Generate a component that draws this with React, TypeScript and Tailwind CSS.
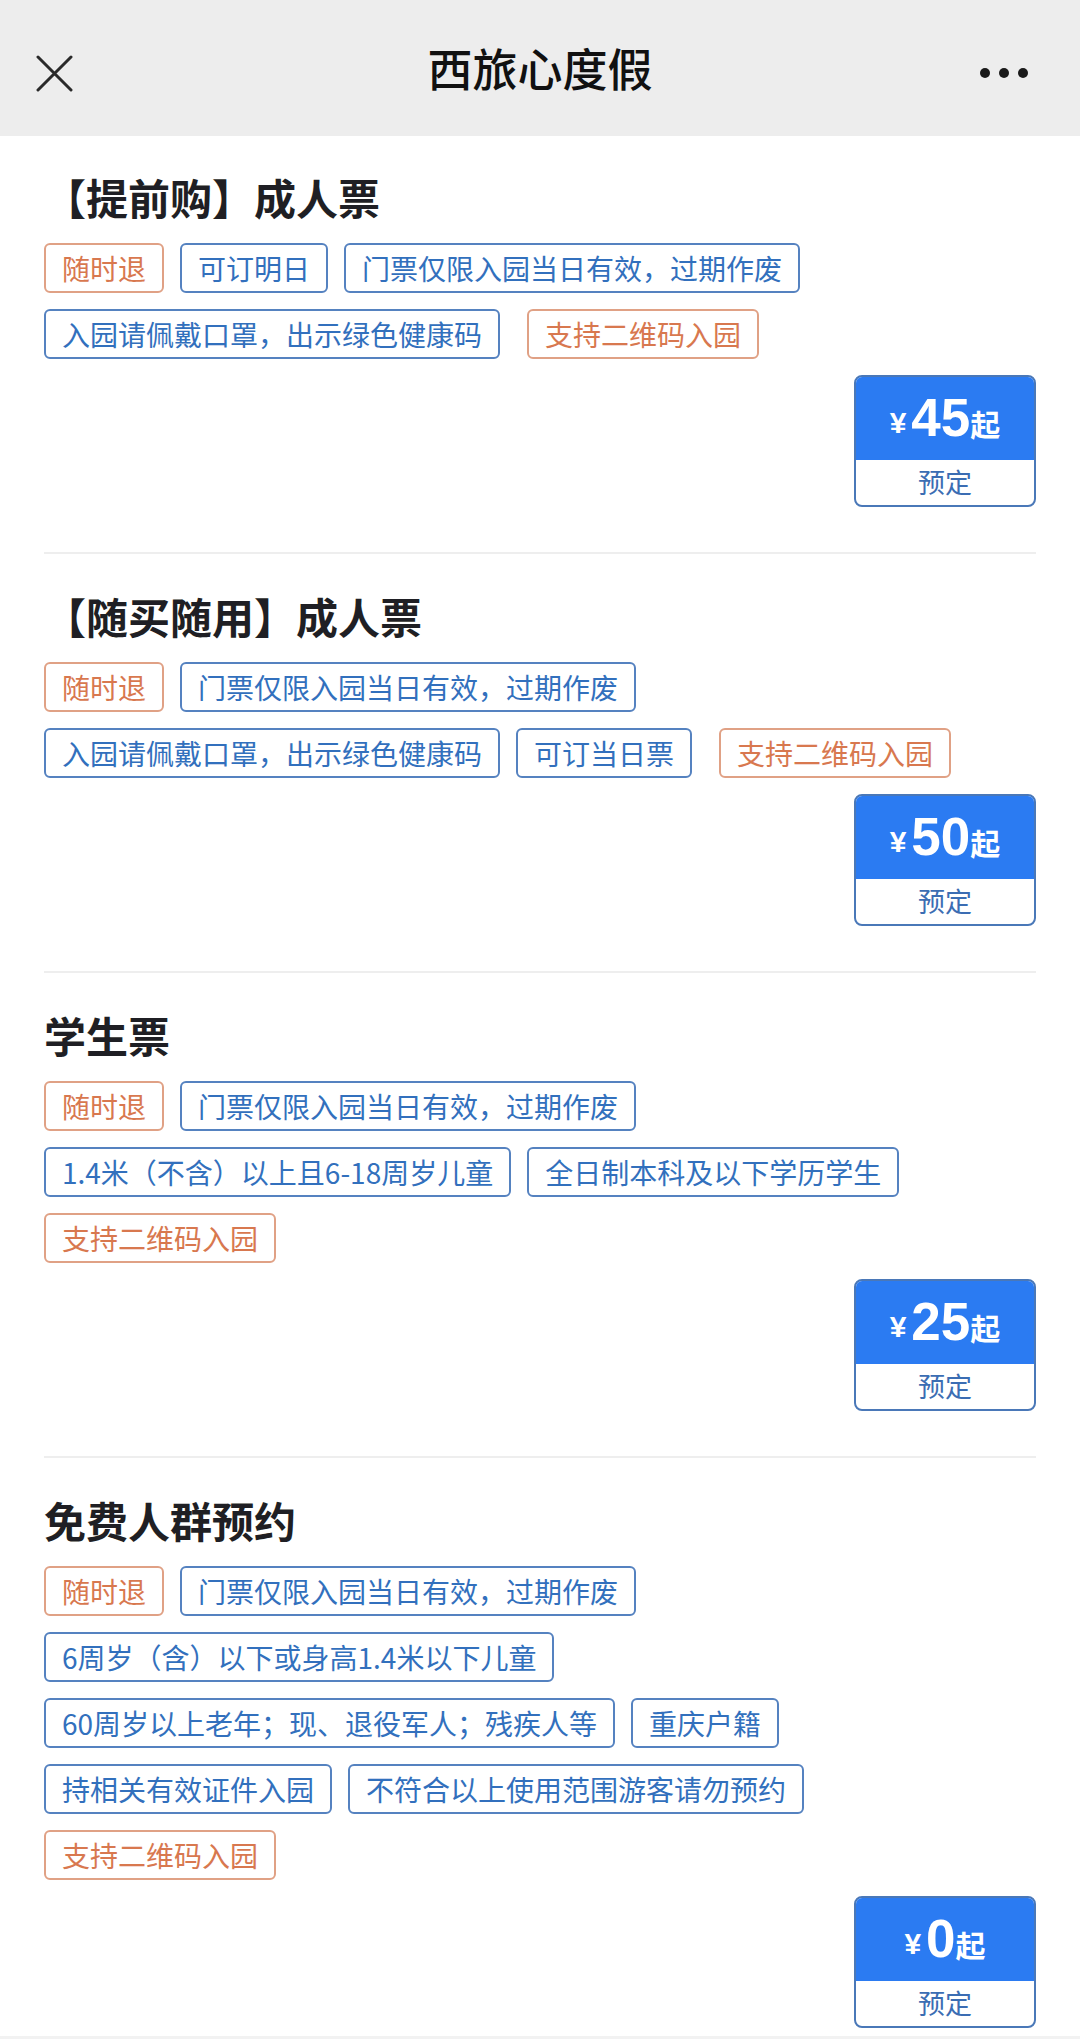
type Tag = { text: string; tone: 'orange' | 'blue' }

type Ticket = {
  title: string
  price: string
  rows: Tag[][]
}

const o = (text: string): Tag => ({ text, tone: 'orange' })
const b = (text: string): Tag => ({ text, tone: 'blue' })

const tickets: Ticket[] = [
  {
    title: '【提前购】成人票',
    price: '45',
    rows: [
      [o('随时退'), b('可订明日'), b('门票仅限入园当日有效，过期作废')],
      [b('入园请佩戴口罩，出示绿色健康码'), o('支持二维码入园')],
    ],
  },
  {
    title: '【随买随用】成人票',
    price: '50',
    rows: [
      [o('随时退'), b('门票仅限入园当日有效，过期作废')],
      [b('入园请佩戴口罩，出示绿色健康码'), b('可订当日票'), o('支持二维码入园')],
    ],
  },
  {
    title: '学生票',
    price: '25',
    rows: [
      [o('随时退'), b('门票仅限入园当日有效，过期作废')],
      [b('1.4米（不含）以上且6-18周岁儿童'), b('全日制本科及以下学历学生')],
      [o('支持二维码入园')],
    ],
  },
  {
    title: '免费人群预约',
    price: '0',
    rows: [
      [o('随时退'), b('门票仅限入园当日有效，过期作废')],
      [b('6周岁（含）以下或身高1.4米以下儿童')],
      [b('60周岁以上老年；现、退役军人；残疾人等'), b('重庆户籍')],
      [b('持相关有效证件入园'), b('不符合以上使用范围游客请勿预约')],
      [o('支持二维码入园')],
    ],
  },
]

const TagChip = ({ tag, first }: { tag: Tag; first: boolean }) => {
  if (tag.tone === 'orange') {
    return (
      <span
        className={`flex h-[50px] items-center rounded-[6px] border-2 border-[#e0a185] px-[16px] text-[28px] leading-none text-[#d8784f] ${first ? '' : 'ml-[11px]'}`}
      >
        {tag.text}
      </span>
    )
  }
  return (
    <span className="flex h-[50px] items-center rounded-[6px] border-2 border-[#5582c0] px-[16px] text-[28px] leading-none text-[#3270bd]">
      {tag.text}
    </span>
  )
}

const PriceButton = ({ price }: { price: string }) => (
  <div className="flex h-[132px] w-[182px] flex-col overflow-hidden rounded-[8px] border-2 border-[#4a78b8]">
    <div className="flex h-[83px] items-end justify-center bg-[#2b7bf2] pb-[22px] font-bold text-white">
      <span className="mr-[5px] text-[30px] leading-none" style={{ fontFamily: '"Liberation Sans", sans-serif' }}>
        ¥
      </span>
      <span
        className="text-[53px]"
        style={{ fontFamily: '"Liberation Sans", sans-serif', lineHeight: '0.76' }}
      >
        {price}
      </span>
      <span className="text-[30px] leading-none">起</span>
    </div>
    <div className="flex flex-1 items-center justify-center text-[27px] text-[#3b6db3]">预定</div>
  </div>
)

export default function App() {
  return (
    <div
      className="min-h-[2039px] w-[1080px] bg-white"
      style={{ fontFamily: '"Noto Sans CJK SC", "Noto Sans", sans-serif' }}
    >
      <header className="relative flex h-[136px] items-center justify-center bg-[#ededed]">
        <svg
          className="absolute left-[36px] top-[55px]"
          width="37"
          height="37"
          viewBox="0 0 37 37"
          fill="none"
          stroke="#2a2a2a"
          strokeWidth="3"
          strokeLinecap="round"
        >
          <path d="M2 2 L35 35 M35 2 L2 35" />
        </svg>
        <h1 className="text-[45px] font-medium text-[#111]">西旅心度假</h1>
        <div className="absolute right-[52px] top-[68px] flex gap-[9px]">
          <span className="h-[10px] w-[10px] rounded-full bg-[#1a1a1a]" />
          <span className="h-[10px] w-[10px] rounded-full bg-[#1a1a1a]" />
          <span className="h-[10px] w-[10px] rounded-full bg-[#1a1a1a]" />
        </div>
      </header>

      <main className="px-[44px]">
        {tickets.map((t, i) => (
          <section
            key={t.title}
            className={
              i === 0
                ? 'border-b-2 border-[#eeeeee] pb-[45px] pt-[37px]'
                : i === tickets.length - 1
                  ? 'pb-[8px] pt-[38px]'
                  : 'border-b-2 border-[#eeeeee] pb-[45px] pt-[38px]'
            }
          >
            <h2 className="h-[48px] text-[42px] font-bold leading-[48px] text-[#1f1f24]">{t.title}</h2>
            <div className="mt-[22px] flex flex-col gap-[16px]">
              {t.rows.map((row, r) => (
                <div key={r} className="flex flex-wrap gap-[16px]">
                  {row.map((tag, k) => (
                    <TagChip key={tag.text} tag={tag} first={k === 0} />
                  ))}
                </div>
              ))}
            </div>
            <div className="mt-[16px] flex justify-end">
              <PriceButton price={t.price} />
            </div>
          </section>
        ))}
      </main>
      <div className="h-[40px] bg-[#f2f2f2]" />
    </div>
  )
}
